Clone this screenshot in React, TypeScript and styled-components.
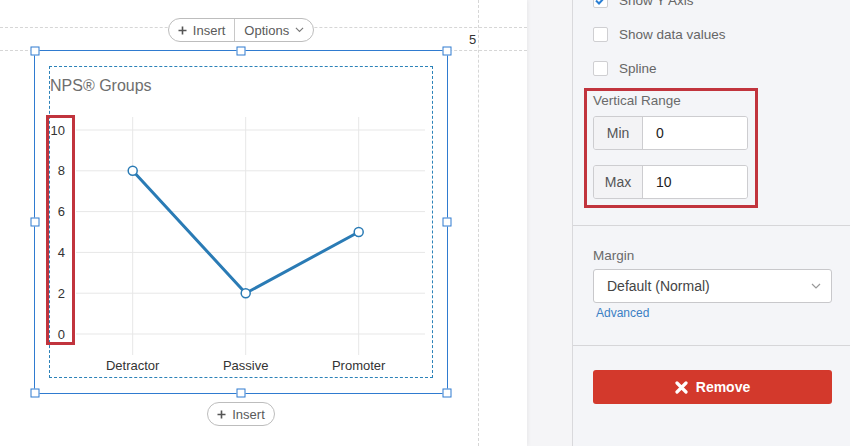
import React from 'react';
import styled, { createGlobalStyle } from 'styled-components';

const GlobalStyle = createGlobalStyle`
  html, body { margin: 0; padding: 0; }
  body {
    font-family: "Liberation Sans", Arial, sans-serif;
    background: #f5f5f7;
    overflow: hidden;
  }
`;

const Page = styled.div`
  display: flex;
  width: 850px;
  height: 446px;
  overflow: hidden;
`;

const Canvas = styled.div`
  position: relative;
  width: 527px;
  flex: none;
  background: #ffffff;
  box-shadow: 1px 0 4px rgba(0, 0, 0, 0.06);
  padding: 18px 0 0 34px;
  box-sizing: border-box;
`;

const GuideH = styled.div<{ $top: number }>`
  position: absolute;
  left: 0;
  right: 0;
  top: ${p => p.$top}px;
  border-top: 1px dashed #d6d6d6;
`;

const GuideV = styled.div`
  position: absolute;
  top: 0;
  bottom: 0;
  left: 478px;
  border-left: 1px dashed #d6d6d6;
`;

const PageNumber = styled.span`
  position: absolute;
  left: 469px;
  top: 32px;
  font-size: 13px;
  color: #333;
`;

const Column = styled.div`
  position: relative;
  width: 414px;
  display: flex;
  flex-direction: column;
  align-items: center;
  gap: 8px;
`;

const Pill = styled.div`
  display: flex;
  align-items: stretch;
  height: 24px;
  box-sizing: border-box;
  border: 1px solid #bdbdbd;
  border-radius: 12px;
  background: #fff;
  font-size: 13px;
  color: #5a5a5a;
  position: relative;
  z-index: 1;
`;

const PillPart = styled.div<{ $divider?: boolean }>`
  display: flex;
  align-items: center;
  gap: 6px;
  padding: 0 9px;
  border-left: ${p => (p.$divider ? '1px solid #c8c8c8' : 'none')};
`;

const Frame = styled.div`
  position: relative;
  width: 414px;
  height: 344px;
  box-sizing: border-box;
  border: 1px solid #2f7bd0;
  padding: 15px 14px 15px 14px;
`;

const Handle = styled.span<{ $x: string; $y: string }>`
  position: absolute;
  width: 7px;
  height: 7px;
  background: #fff;
  border: 1px solid #2f7bd0;
  left: ${p => p.$x};
  top: ${p => p.$y};
  transform: translate(-50%, -50%);
`;

const ChartBox = styled.div`
  height: 100%;
  box-sizing: border-box;
  border: 1px dashed #2c82b8;
  display: flex;
  flex-direction: column;
`;

const ChartTitle = styled.div`
  font-size: 16px;
  color: #6e6e6e;
  padding: 10px 0 0 0;
  line-height: 18px;
  height: 23px;
`;

const ChartSvg = styled.svg`
  overflow: visible;
  display: block;
  font-family: "Liberation Sans", Arial, sans-serif;
`;

const Gutter = styled.div`
  width: 45px;
  flex: none;
  background: #f5f5f7;
`;

const Panel = styled.div`
  flex: 1;
  background: #f4f5f8;
  border-left: 1px solid #d9d9dc;
  display: flex;
  flex-direction: column;
`;

const Section = styled.div<{ $pad: string; $divider?: boolean }>`
  padding: ${p => p.$pad};
  border-bottom: ${p => (p.$divider ? '1px solid #d6d6d9' : 'none')};
  display: flex;
  flex-direction: column;
`;

const CheckList = styled.div`
  margin-top: -11px;
  display: flex;
  flex-direction: column;
`;

const CheckRow = styled.label`
  display: flex;
  align-items: center;
  height: 22px;
  gap: 11px;
  font-size: 13.5px;
  color: #666;
  & + & { margin-top: 12px; }
`;

const Box = styled.span`
  width: 15px;
  height: 15px;
  box-sizing: border-box;
  border: 1px solid #cfcfd2;
  border-radius: 2px;
  background: #fff;
  display: flex;
  align-items: center;
  justify-content: center;
`;

const Highlight = styled.div`
  margin: 9px 0 0 -9px;
  width: 174px;
  box-sizing: border-box;
  border: 3px solid #c1343d;
  padding: 2px 7px 6px 6px;
  display: flex;
  flex-direction: column;
`;

const FieldLabel = styled.div`
  font-size: 13.5px;
  line-height: 16px;
  color: #6a6a6a;
`;

const InputGroup = styled.div`
  display: flex;
  height: 34px;
  box-sizing: border-box;
  border: 1px solid #cdcdd0;
  border-radius: 3px;
  overflow: hidden;
  margin-top: 7px;
  & + & { margin-top: 15px; }
`;

const Addon = styled.div`
  width: 48px;
  background: #f3f3f5;
  border-right: 1px solid #cdcdd0;
  display: flex;
  align-items: center;
  justify-content: center;
  font-size: 14px;
  color: #555;
`;

const InputValue = styled.div`
  flex: 1;
  background: #fff;
  display: flex;
  align-items: center;
  padding-left: 13px;
  font-size: 14px;
  color: #222;
`;

const Select = styled.div`
  margin-top: 5px;
  height: 34px;
  box-sizing: border-box;
  border: 1px solid #c8c8cb;
  border-radius: 3px;
  background: #fff;
  display: flex;
  align-items: center;
  justify-content: space-between;
  padding: 0 10px 0 13px;
  font-size: 14px;
  color: #444;
`;

const Link = styled.a`
  margin: 3px 0 0 3px;
  font-size: 12px;
  line-height: 14px;
  color: #3b7fc4;
  text-decoration: none;
`;

const RemoveButton = styled.button`
  height: 34px;
  border: none;
  border-radius: 3px;
  background: #d3392c;
  color: #fff;
  font-family: inherit;
  font-size: 14px;
  font-weight: 700;
  display: flex;
  align-items: center;
  justify-content: center;
  gap: 8px;
  padding: 0;
`;

const Chevron = ({ size = 10, color = '#888' }: { size?: number; color?: string }) => (
  <svg width={size} height={size * 0.6} viewBox="0 0 10 6">
    <path d="M1 1l4 4 4-4" fill="none" stroke={color} strokeWidth="1.2" />
  </svg>
);

const Plus = () => (
  <svg width="9" height="9" viewBox="0 0 9 9">
    <path d="M4.5 0.5v8M0.5 4.5h8" stroke="#555" strokeWidth="1.6" />
  </svg>
);

const categories = ['Detractor', 'Passive', 'Promoter'];
const values = [8, 2, 5];
const xs = [82.7, 195.7, 308.7];
const yFor = (v: number) => 234 - v * 20.4;

const LineChart = () => (
  <ChartSvg width="383" height="277">
    {[0, 2, 4, 6, 8, 10].map(v => (
      <line key={v} x1="26" x2="375" y1={yFor(v)} y2={yFor(v)} stroke="#e7e7e7" strokeWidth="1" />
    ))}
    {xs.map(x => (
      <line key={x} x1={x} x2={x} y1="17" y2="255" stroke="#e7e7e7" strokeWidth="1" />
    ))}
    {[0, 2, 4, 6, 8, 10].map(v => (
      <text key={v} x="15" y={yFor(v) + 4.5} fontSize="13" fill="#333" textAnchor="end">
        {v}
      </text>
    ))}
    {categories.map((c, i) => (
      <text key={c} x={xs[i]} y="270" fontSize="13" fill="#333" textAnchor="middle">
        {c}
      </text>
    ))}
    <polyline
      points={values.map((v, i) => `${xs[i]},${yFor(v)}`).join(' ')}
      fill="none"
      stroke="#2a7bb5"
      strokeWidth="3"
      strokeLinejoin="round"
    />
    {values.map((v, i) => (
      <circle key={i} cx={xs[i]} cy={yFor(v)} r="4.5" fill="#fff" stroke="#2a7bb5" strokeWidth="1.5" />
    ))}
    <rect x="-2.5" y="16.5" width="26" height="227" fill="none" stroke="#c1343d" strokeWidth="3" />
  </ChartSvg>
);

const handles: [string, string][] = [
  ['0', '0'], ['50%', '0'], ['100%', '0'],
  ['0', '50%'], ['100%', '50%'],
  ['0', '100%'], ['50%', '100%'], ['100%', '100%'],
];

export default function App() {
  return (
    <Page>
      <GlobalStyle />
      <Canvas>
        <GuideH $top={27} />
        <GuideH $top={50} />
        <GuideV />
        <PageNumber>5</PageNumber>
        <Column>
          <Pill>
            <PillPart><Plus />Insert</PillPart>
            <PillPart $divider>Options <Chevron size={9} color="#777" /></PillPart>
          </Pill>
          <Frame>
            {handles.map(([x, y], i) => (
              <Handle key={i} $x={x} $y={y} />
            ))}
            <ChartBox>
              <ChartTitle>NPS® Groups</ChartTitle>
              <LineChart />
            </ChartBox>
          </Frame>
          <Pill>
            <PillPart><Plus />Insert</PillPart>
          </Pill>
        </Column>
      </Canvas>
      <Gutter />
      <Panel>
        <Section $pad="0 18px 17px 20px" $divider>
          <CheckList>
            <CheckRow>
              <Box>
                <svg width="11" height="9" viewBox="0 0 11 9">
                  <path d="M1 4.5l3 3L10 1" fill="none" stroke="#2a7fd4" strokeWidth="2" />
                </svg>
              </Box>
              Show Y Axis
            </CheckRow>
            <CheckRow><Box />Show data values</CheckRow>
            <CheckRow><Box />Spline</CheckRow>
          </CheckList>
          <Highlight>
            <FieldLabel>Vertical Range</FieldLabel>
            <InputGroup>
              <Addon>Min</Addon>
              <InputValue>0</InputValue>
            </InputGroup>
            <InputGroup>
              <Addon>Max</Addon>
              <InputValue>10</InputValue>
            </InputGroup>
          </Highlight>
        </Section>
        <Section $pad="22px 18px 25px 20px" $divider>
          <FieldLabel>Margin</FieldLabel>
          <Select>
            Default (Normal)
            <Chevron size={10} color="#999" />
          </Select>
          <Link href="#">Advanced</Link>
        </Section>
        <Section $pad="24px 18px 0 20px">
          <RemoveButton>
            <svg width="13" height="13" viewBox="0 0 13 13">
              <path d="M2 2l9 9M11 2l-9 9" stroke="#fff" strokeWidth="3.2" strokeLinecap="round" />
            </svg>
            Remove
          </RemoveButton>
        </Section>
      </Panel>
    </Page>
  );
}
